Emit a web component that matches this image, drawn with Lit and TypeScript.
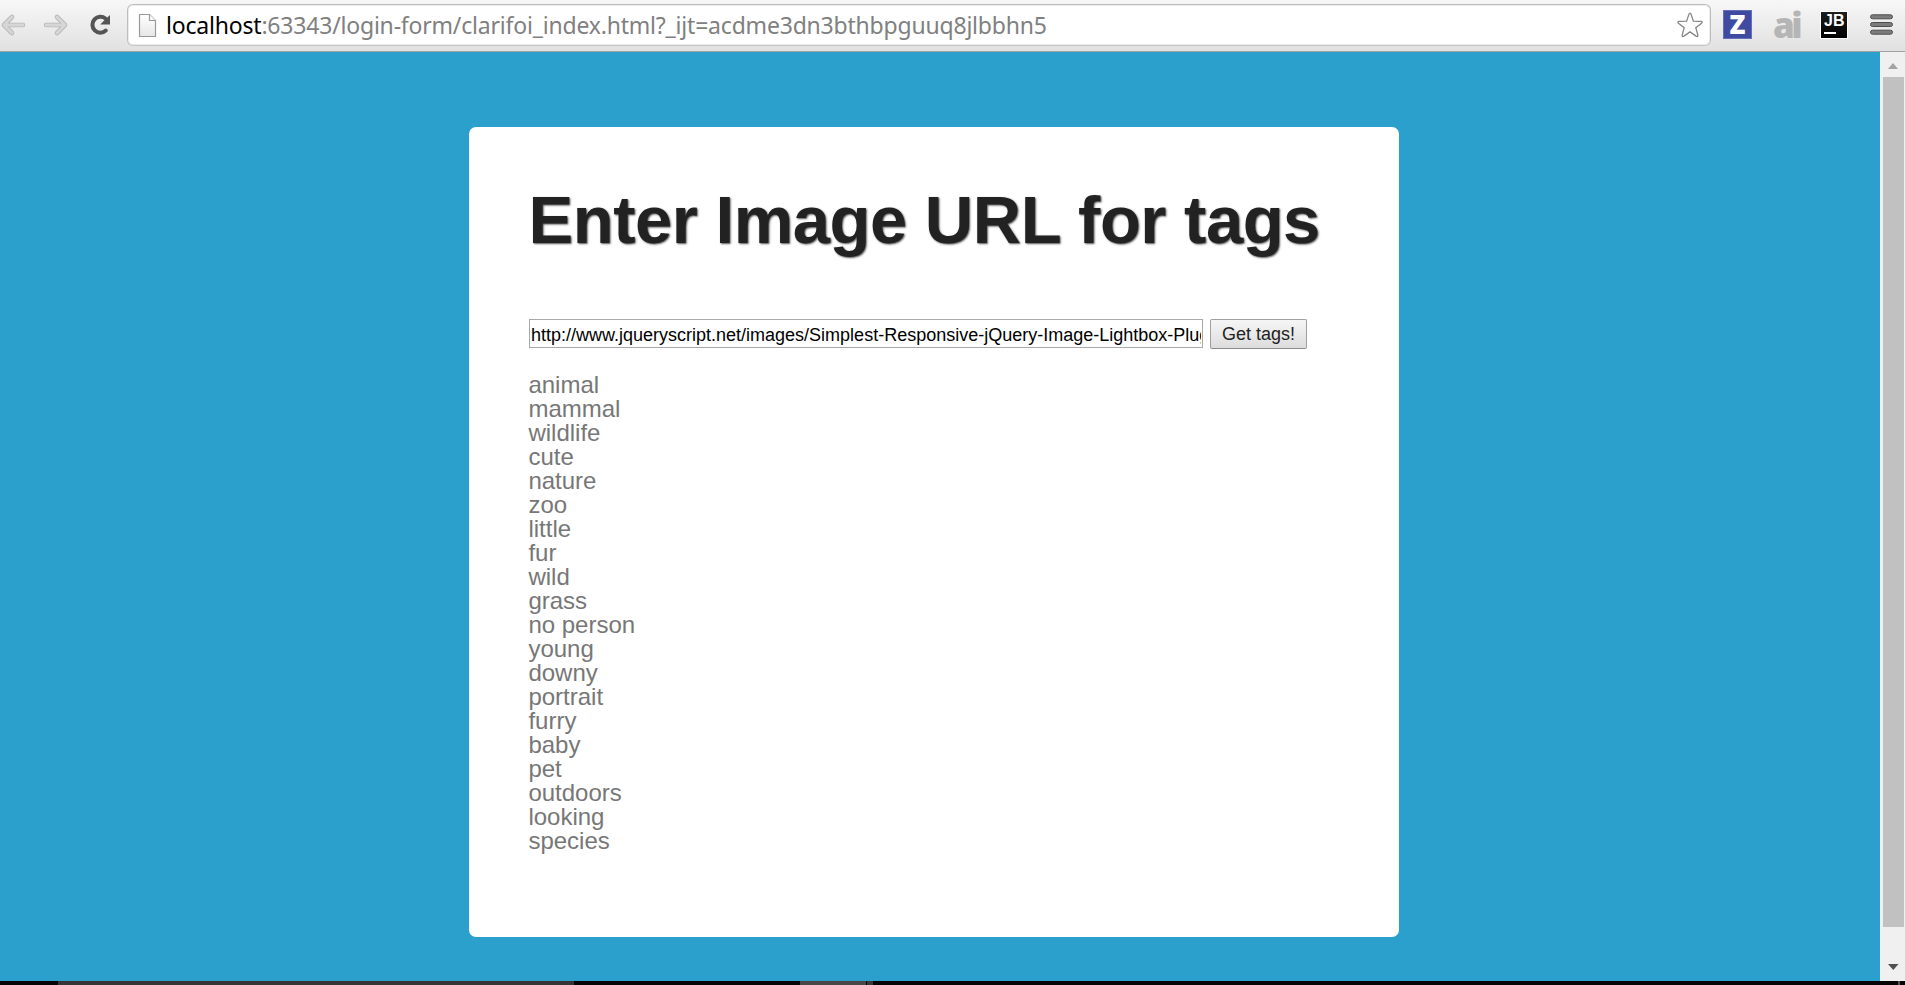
import { LitElement, html, css } from "lit";
import { customElement } from "lit/decorators.js";

@customElement("browser-toolbar")
class BrowserToolbar extends LitElement {
  static styles = css`
    :host { display: block; }
    .bar {
      box-sizing: border-box; height: 52px; display: flex; align-items: flex-start;
      background: linear-gradient(#f7f7f7, #e1e1e1);
      border-bottom: 1px solid #a3a3a3;
    }
    svg { display: block; flex: none; }
    .back { margin: 11px 14px 0 0; }
    .fwd { margin: 11px 17px 0 0; }
    .reload { margin: 11px 12px 0 0; }
    .omni {
      flex: 1; box-sizing: border-box; height: 42px; margin-top: 4px;
      display: flex; align-items: center; background: #fff;
      border: 1px solid #bdbdbd; border-bottom-color: #c6c6c6; border-radius: 6px;
      box-shadow: inset 0 0 0 1px #ececec;
      padding: 0 6px 0 10px;
    }
    .url {
      flex: 1; margin-left: 9px; font: 23px/32px "Noto Sans", sans-serif; letter-spacing: -0.2px;
      color: #808080; white-space: pre;
    }
    .host { color: #000; }
    .z { margin: 10px 0 0 12px; width: 29px; height: 29px; background: #3f4ba0;
      box-sizing: border-box; border: 1px solid #6570bb; display: flex; justify-content: center; align-items: center;
      font: 800 26px/27px "Open Sans", sans-serif; color: #fff; }
    .ai { margin: 5px 0 0 21px; width: 27px; font: 800 35px/40px "Open Sans", sans-serif; letter-spacing: -3.5px; color: #b5b5b5; }
    .jb { margin: 11px 0 0 20px; box-sizing: border-box; width: 28px; height: 28px; border: 1px solid #fff;
      background: linear-gradient(#1e1e1e, #000); color: #fff; padding: 0 0 0 3px;
      font: bold 16px/18px "Liberation Sans", sans-serif; letter-spacing: 0; }
    .rule { width: 12px; height: 2px; background: #fff; margin: 2px 0 0 0; }
    .menu { margin: 13px 11px 0 21px; }
  `;
  render() {
    return html`<div class="bar">
      <svg class="back" width="28" height="28" viewBox="0 0 28 28" fill="none" stroke-linecap="round" stroke-linejoin="round">
        <path d="M12 6L4 14l8 8M4.500 14H23" stroke="#b9b9b9" stroke-width="4.600"/>
        <path d="M12 6L4 14l8 8M4.500 14H23" stroke="#d6d6d6" stroke-width="2.800"/>
      </svg>
      <svg class="fwd" width="28" height="28" viewBox="0 0 28 28" fill="none" stroke-linecap="round" stroke-linejoin="round">
        <path d="M15 6l8 8-8 8M22.500 14H4" stroke="#b9b9b9" stroke-width="4.600"/>
        <path d="M15 6l8 8-8 8M22.500 14H4" stroke="#d6d6d6" stroke-width="2.800"/>
      </svg>
      <svg class="reload" width="28" height="28" viewBox="0 0 28 28">
        <path d="M18.500 7.500A8 8 0 1 0 18.800 19.600" fill="none" stroke="#555" stroke-width="4" stroke-linecap="round"/>
        <path d="M23 4v9.500H13.200l3.500-3.500Z" fill="#555"/>
      </svg>
      <div class="omni">
        <svg width="19" height="25" viewBox="0 0 19 25">
          <defs><linearGradient id="g" x2="0" y2="1"><stop stop-color="#fff"/><stop offset="1" stop-color="#e6e6e6"/></linearGradient></defs>
          <path d="M1.500 1.500h10l6 6v16h-16z" fill="url(#g)" stroke="#999" stroke-width="1.200"/>
          <path d="M11.500 1.500v6h6" fill="#fff" stroke="#999" stroke-width="1.200"/>
        </svg>
        <div class="url"><span class="host">localhost</span>:63343/login-form/clarifoi_index.html?_ijt=acdme3dn3bthbpguuq8jlbbhn5</div>
        <svg width="28" height="28" viewBox="0 0 28 28">
          <path d="M14 2.200c.7 0 .9.600 1.100 1.200l2.300 6.700 7.300.200c1.600.1 2 .9.800 1.900l-5.700 4.500 2 7.200c.4 1.500-.4 2-1.700 1.200L14 20.900l-6.100 4.200c-1.300.8-2.100.3-1.700-1.200l2-7.200-5.700-4.500c-1.200-1-.8-1.800.8-1.900l7.300-.2 2.300-6.700c.2-.600.400-1.200 1.100-1.200Z" fill="#fff" stroke="#858585" stroke-width="1.300"/>
        </svg>
      </div>
      <div class="z">Z</div>
      <div class="ai">ai</div>
      <div class="jb">JB<div class="rule"></div></div>
      <svg class="menu" width="25" height="24" viewBox="0 0 25 24">
        <g fill="#7c7c7c" stroke="#4e4e4e" stroke-width="1">
          <rect x="1.500" y="1.800" width="22" height="4" rx="2"/><rect x="1.500" y="9.500" width="22" height="4" rx="2"/><rect x="1.500" y="17.200" width="22" height="4" rx="2"/>
        </g>
      </svg>
    </div>`;
  }
}

@customElement("tag-card")
class TagCard extends LitElement {
  static styles = css`
    :host { display: block; font-family: "Liberation Sans", Arial, sans-serif; }
    .card { box-sizing: border-box; width: 930px; height: 810px; background: #fff; border-radius: 7px; padding: 53px 60px 0; }
    h1 { margin: 0 0 0 -0.5px; font-size: 67px; letter-spacing: -0.48px; line-height: 80px; font-weight: bold; color: #222; white-space: nowrap;
      text-shadow: 1px 1px 2px #555; }
    .row { display: flex; margin-top: 59px; gap: 7px; align-items: flex-start; }
    input { box-sizing: border-box; width: 674px; height: 29px; border: 1px solid #a9a9a9; padding: 3px 1px 0 1px; margin: 0;
      font: 18px "Liberation Sans", Arial, sans-serif; color: #000; background: #fff; outline: none; border-radius: 0; }
    button { box-sizing: border-box; width: 97px; height: 30px; padding: 0; margin: 0; border: 1px solid #a0a0a0; border-bottom-color: #8c8c8c;
      border-radius: 2px; background: linear-gradient(#f6f6f6, #dcdcdc);
      font: 18px/26px "Liberation Sans", Arial, sans-serif; color: #222; white-space: nowrap; }
    ul { list-style: none; margin: 24px 0 0 -0.6px; padding: 0; font-size: 24px; line-height: 24px; color: #777; }
  `;
  tags = ["animal", "mammal", "wildlife", "cute", "nature", "zoo", "little", "fur", "wild", "grass", "no person", "young",
    "downy", "portrait", "furry", "baby", "pet", "outdoors", "looking", "species"];
  render() {
    return html`<div class="card">
      <h1>Enter Image URL for tags</h1>
      <div class="row">
        <input type="text" value="http://www.jqueryscript.net/images/Simplest-Responsive-jQuery-Image-Lightbox-Plugin-simple-lightbox.jpg">
        <button>Get tags!</button>
      </div>
      <ul>${this.tags.map((t) => html`<li>${t}</li>`)}</ul>
    </div>`;
  }
}

@customElement("app-root")
class AppRoot extends LitElement {
  static styles = css`
    :host { display: flex; flex-direction: column; width: 1905px; height: 985px; overflow: hidden; }
    .view { flex: 1; display: flex; min-height: 0; }
    .page { flex: 1; background: #2ca0cd; padding: 75px 0 0 469px; }
    .scroll { width: 25px; background: #f0f0f0; display: flex; flex-direction: column; align-items: center; }
    .scroll svg { display: block; flex: none; }
    .thumb { width: 21px; height: 850px; margin-left: 2px; background: #c1c1c1; flex: none; }
    .task { height: 4px; flex: none; display: flex; background: #080404; }
    .t1 { width: 516px; margin-left: 58px; background: #363435; }
    .t2 { width: 66px; margin-left: 226px; background: #494646; }
    .t3 { width: 6px; margin-left: 1px; background: #3b3838; }
    .t4 { width: 2px; margin: 0 5px 0 auto; background: #555; }
  `;
  render() {
    return html`<browser-toolbar></browser-toolbar>
      <div class="view">
        <div class="page"><tag-card></tag-card></div>
        <div class="scroll">
          <svg width="25" height="25" viewBox="0 0 25 25"><path d="M8 17l5-6 5 6z" fill="#a3a3a3"/></svg>
          <div class="thumb"></div>
          <svg width="25" height="54" viewBox="0 0 25 54"><path d="M8 37h10.500l-5.200 6z" fill="#505050"/></svg>
        </div>
      </div>
      <div class="task"><div class="t1"></div><div class="t2"></div><div class="t3"></div><div class="t4"></div></div>`;
  }
}
